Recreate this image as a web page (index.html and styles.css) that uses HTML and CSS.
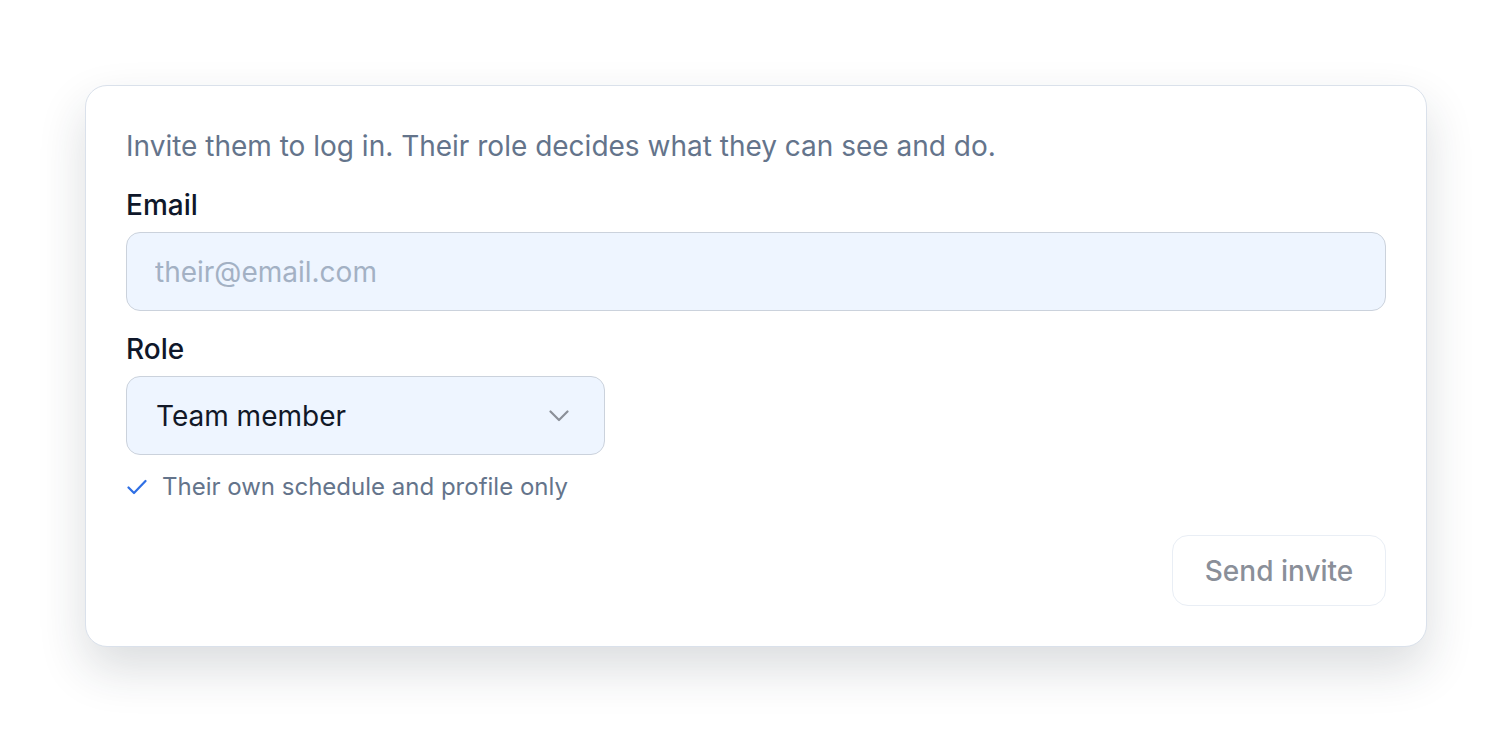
FILE: index.html
```html
<!DOCTYPE html>
<html lang="en">
<head>
    <meta charset="UTF-8">
    <meta name="viewport" content="width=device-width, initial-scale=1.0">
    <title>Invite</title>
    <link rel="stylesheet" href="styles.css">
</head>
<body>
    <div class="invite-card">
        <p class="intro">Invite them to log in. Their role decides what they can see and do.</p>

        <div class="field">
            <label class="field-label" for="email">Email</label>
            <input class="text-input" id="email" type="email" placeholder="their@email.com">
        </div>

        <div class="field">
            <label class="field-label" for="role">Role</label>
            <div class="select">
                <span class="select-value">Team member</span>
                <svg class="chevron" width="20" height="12" viewBox="0 0 20 12" fill="none">
                    <path d="M1.5 1.5 L10 10 L18.5 1.5" stroke="#8b9099" stroke-width="2.2" stroke-linecap="round" stroke-linejoin="round"/>
                </svg>
            </div>
            <div class="role-hint">
                <svg class="check" width="20" height="16" viewBox="0 0 20 16" fill="none">
                    <path d="M1.5 8.5 L7 14 L18.5 2" stroke="#2f6fe4" stroke-width="2.2" stroke-linecap="round" stroke-linejoin="round"/>
                </svg>
                <span>Their own schedule and profile only</span>
            </div>
        </div>

        <div class="actions">
            <button class="send-btn" disabled>Send invite</button>
        </div>
    </div>
</body>
</html>
```

FILE: styles.css
```css
body {
    margin: 0;
    padding: 85px 85px 105px;
    background-color: #ffffff;
    font-family: Inter, "Noto Sans", sans-serif;
}

.invite-card {
    background-color: #ffffff;
    border: 1px solid #dae1eb;
    border-radius: 22px;
    padding: 40px;
    box-shadow: 0 22px 48px rgba(30, 41, 59, 0.16);
    display: flex;
    flex-direction: column;
}

.intro {
    margin: 3px 0 25px;
    font-size: 28px;
    line-height: 34px;
    color: #64748b;
}

.field {
    display: flex;
    flex-direction: column;
    margin-bottom: 21px;
}

.field-label {
    font-size: 28px;
    line-height: 34px;
    font-weight: 500;
    color: #0f172a;
    margin-bottom: 10px;
}

.text-input {
    height: 79px;
    box-sizing: border-box;
    border: 1.5px solid #cbd2dc;
    border-radius: 14px;
    background-color: #eef5ff;
    padding: 0 28px;
    font-family: inherit;
    font-size: 28px;
    color: #0f172a;
    outline: none;
}

.text-input::placeholder {
    color: #a3b1c4;
}

.select {
    width: 479px;
    height: 79px;
    box-sizing: border-box;
    border: 1.5px solid #cbd2dc;
    border-radius: 14px;
    background-color: #eef5ff;
    padding: 0 35px 0 29px;
    display: flex;
    align-items: center;
    justify-content: space-between;
}

.select-value {
    font-size: 28px;
    color: #111827;
}

.chevron {
    display: block;
}

.role-hint {
    display: flex;
    align-items: center;
    gap: 15px;
    margin-top: 17px;
    padding-left: 1px;
    font-size: 24px;
    line-height: 29px;
    color: #64748b;
}

.check {
    display: block;
}

.actions {
    display: flex;
    justify-content: flex-end;
    margin-top: 13px;
}

.send-btn {
    width: 214px;
    height: 71px;
    border: 1.5px solid #e9eef5;
    border-radius: 16px;
    background-color: #ffffff;
    font-family: inherit;
    font-size: 28px;
    font-weight: 500;
    color: #8a8f99;
    cursor: not-allowed;
}
```
